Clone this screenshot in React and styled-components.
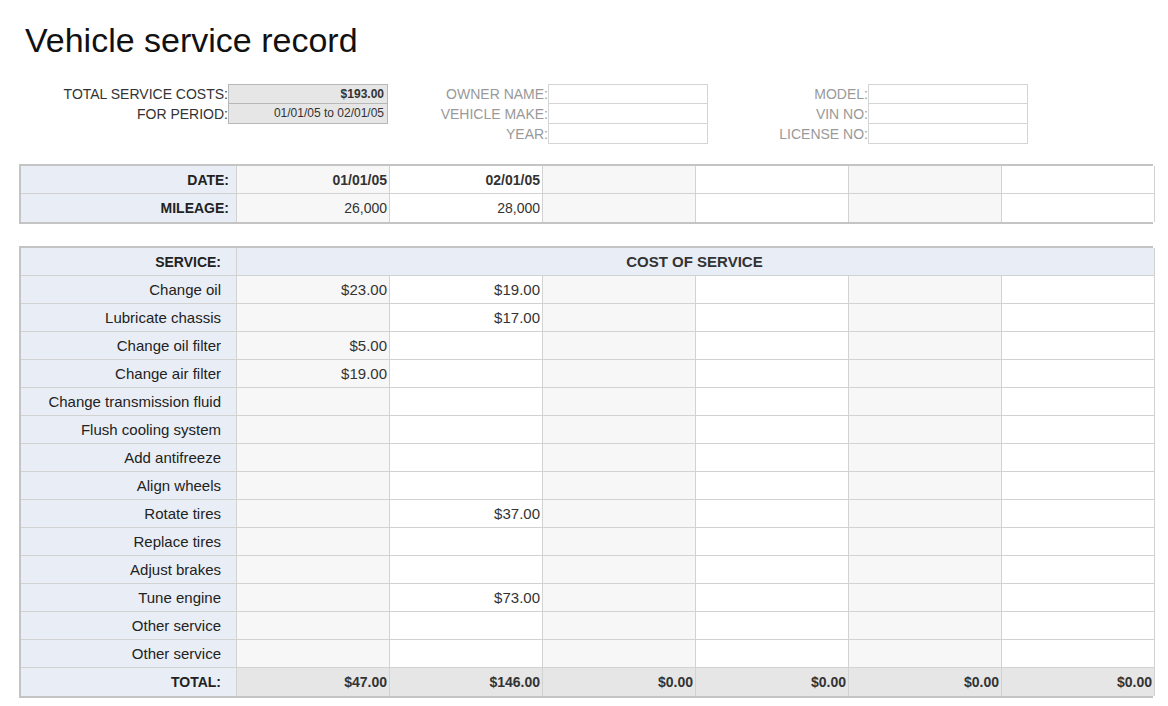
import React from "react";
import styled, { createGlobalStyle } from "styled-components";

const Global = createGlobalStyle`
  body { margin: 0; background: #fff; font-family: "Liberation Sans", Arial, sans-serif; color: #333; }
`;
const Page = styled.div`padding: 18px 13px 0 19px; width: 1136px;`;
const Title = styled.h1`
  margin: 0 0 22px 6px; font-weight: normal; font-size: 34px; color: #111; line-height: 44px;
`;
const Info = styled.div`
  display: grid; grid-template-columns: 209px 153px 153px 153px 153px 153px;
  grid-auto-rows: 20px; column-gap: 7px; row-gap: 0; margin-left: 0;
  font-size: 14px;
`;
const InfoLabel = styled.div`
  text-align: right; color: ${p => p.$muted ? "#999" : "#333"}; line-height: 20px;
  grid-column: ${p => p.$col}; grid-row: ${p => p.$row};
`;
const InfoBox = styled.div`
  grid-column: ${p => p.$col}; grid-row: ${p => p.$row};
  border: 1px solid ${p => p.$filled ? "#b8b8b8" : "#d4d4d4"};
  background: ${p => p.$filled ? "#e6e6e6" : "#fff"};
  margin-left: -7px; margin-top: ${p => p.$row > 1 ? "-1px" : "0"};
  font-size: 12px; font-weight: ${p => p.$bold ? "bold" : "normal"};
  text-align: right; padding: 0 3px; line-height: 18px;
`;
const Table = styled.div`
  display: grid; grid-template-columns: 216px repeat(6, 153px);
  grid-auto-rows: 28px; border: 2px solid #c4c4c4; margin-top: ${p => p.$mt}px;
  font-size: 15px; width: 1134px; box-sizing: border-box;
`;
const Cell = styled.div`
  border-right: 1px solid #d2d2d2; border-bottom: 1px solid #d2d2d2;
  display: flex; align-items: center; justify-content: ${p => p.$center ? "center" : "flex-end"};
  padding: 0 ${p => p.$label ? "17px" : "2px"} 0 0;
  background: ${p => p.$label ? "#e9eef6" : p.$head ? "#e9eef6" : p.$total ? "#e6e6e6" : p.$odd ? "#f7f7f7" : "#fff"};
  font-weight: ${p => p.$bold ? "bold" : "normal"};
  font-size: ${p => p.$small ? "14px" : "15px"};
  grid-column: ${p => p.$span || "auto"};
  &:nth-last-child(-n+7) { border-bottom: none; }
`;
const LabelCell = styled(Cell)`padding-right: ${p => p.$pr || 7}px; color: #222;`;

const services = [
  ["Change oil", "$23.00", "$19.00"],
  ["Lubricate chassis", "", "$17.00"],
  ["Change oil filter", "$5.00", ""],
  ["Change air filter", "$19.00", ""],
  ["Change transmission fluid"], ["Flush cooling system"], ["Add antifreeze"], ["Align wheels"],
  ["Rotate tires", "", "$37.00"], ["Replace tires"], ["Adjust brakes"],
  ["Tune engine", "", "$73.00"], ["Other service"], ["Other service"],
];
const six = [0, 1, 2, 3, 4, 5];

export default function App() {
  return (
    <Page>
      <Global />
      <Title>Vehicle service record</Title>
      <Info>
        <InfoLabel $col={1} $row={1}>TOTAL SERVICE COSTS:</InfoLabel>
        <InfoBox $col={2} $row={1} $filled $bold>$193.00</InfoBox>
        <InfoLabel $col={1} $row={2}>FOR PERIOD:</InfoLabel>
        <InfoBox $col={2} $row={2} $filled>01/01/05 to 02/01/05</InfoBox>
        <InfoLabel $col={3} $row={1} $muted>OWNER NAME:</InfoLabel>
        <InfoBox $col={4} $row={1} />
        <InfoLabel $col={3} $row={2} $muted>VEHICLE MAKE:</InfoLabel>
        <InfoBox $col={4} $row={2} />
        <InfoLabel $col={3} $row={3} $muted>YEAR:</InfoLabel>
        <InfoBox $col={4} $row={3} />
        <InfoLabel $col={5} $row={1} $muted>MODEL:</InfoLabel>
        <InfoBox $col={6} $row={1} />
        <InfoLabel $col={5} $row={2} $muted>VIN NO:</InfoLabel>
        <InfoBox $col={6} $row={2} />
        <InfoLabel $col={5} $row={3} $muted>LICENSE NO:</InfoLabel>
        <InfoBox $col={6} $row={3} />
      </Info>
      <Table $mt={20}>
        <LabelCell $label $bold $small>DATE:</LabelCell>
        {six.map(i => <Cell key={i} $odd={i % 2 === 0} $bold $small>{["01/01/05", "02/01/05"][i] || ""}</Cell>)}
        <LabelCell $label $bold $small>MILEAGE:</LabelCell>
        {six.map(i => <Cell key={i} $odd={i % 2 === 0} $small>{["26,000", "28,000"][i] || ""}</Cell>)}
      </Table>
      <Table $mt={22}>
        <LabelCell $label $bold $small $pr={15}>SERVICE:</LabelCell>
        <Cell $head $bold $center $span="2 / span 6">COST OF SERVICE</Cell>
        {services.map((s, r) => (
          <React.Fragment key={r}>
            <LabelCell $label $pr={15}>{s[0]}</LabelCell>
            {six.map(i => <Cell key={i} $odd={i % 2 === 0}>{s[i + 1] || ""}</Cell>)}
          </React.Fragment>
        ))}
        <LabelCell $label $bold $small $pr={15}>TOTAL:</LabelCell>
        {["$47.00", "$146.00", "$0.00", "$0.00", "$0.00", "$0.00"].map((v, i) => (
          <Cell key={i} $total $bold $small>{v}</Cell>
        ))}
      </Table>
    </Page>
  );
}
